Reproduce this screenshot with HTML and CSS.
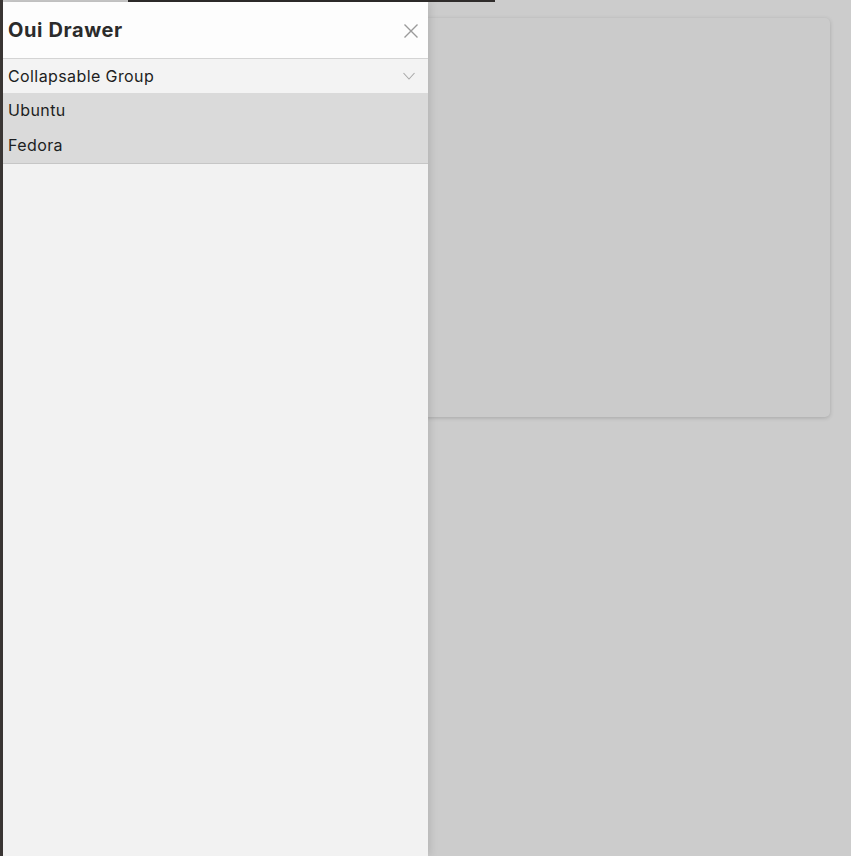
FILE: index.html
```html
<!DOCTYPE html>
<html>
<head>
<meta charset="utf-8">
<link rel="stylesheet" href="styles.css">
</head>
<body>
<div class="topbar"></div>
<main class="page">
  <div class="card"></div>
</main>
<aside class="drawer">
  <header class="drawer-header">
    <h1 class="drawer-title">Oui Drawer</h1>
    <button class="close" aria-label="Close">
      <svg width="16" height="16" viewBox="0 0 16 16"><path d="M1.5 1.5 L14.5 14.5 M14.5 1.5 L1.5 14.5" stroke="#9a9a9a" stroke-width="1.4" fill="none"/></svg>
    </button>
  </header>
  <div class="group">
    <div class="group-head">
      <span>Collapsable Group</span>
      <svg class="chev" width="14" height="8" viewBox="0 0 14 8"><path d="M1.5 1 L7 7 L12.5 1" stroke="#a8a8a8" stroke-width="1.1" fill="none"/></svg>
    </div>
    <div class="group-items">
      <div class="item">Ubuntu</div>
      <div class="item">Fedora</div>
    </div>
  </div>
</aside>
</body>
</html>
```
FILE: styles.css
```css
html, body {
  margin: 0;
  padding: 0;
  height: 100%;
}
body {
  background: #cccccc;
  font-family: "Inter", "Noto Sans", sans-serif;
  color: #1d1e22;
  border-left: 3px solid #3b3735;
  box-sizing: border-box;
  overflow: hidden;
}
.topbar {
  position: absolute;
  top: 0;
  left: 128px;
  width: 367px;
  height: 2px;
  background: #2f2c2b;
}
.page {
  padding: 18px 21px 0 20px;
}
.card {
  height: 399px;
  background: #cbcbcb;
  border-radius: 5px;
  box-shadow: 0 1px 4px rgba(0,0,0,0.18);
}
.drawer {
  position: fixed;
  top: 2px;
  left: 3px;
  bottom: 0;
  width: 425px;
  background: #f2f2f2;
  box-shadow: 2px 0 8px rgba(0,0,0,0.12);
  display: flex;
  flex-direction: column;
}
.drawer-header {
  height: 56px;
  background: #fdfdfd;
  border-bottom: 1px solid #d4d4d4;
  display: flex;
  align-items: center;
  justify-content: space-between;
  padding: 0 9px 0 5px;
}
.drawer-title {
  margin: 0;
  font-size: 20px;
  font-weight: 700;
  color: #2b2b2b;
  letter-spacing: 0.6px;
}
.close {
  border: 0;
  background: none;
  padding: 0;
  display: flex;
  margin-top: 1px;
}
.group-head {
  height: 34px;
  background: #f3f3f3;
  display: flex;
  align-items: center;
  justify-content: space-between;
  padding: 0 12px 0 5px;
  font-size: 16px;
  letter-spacing: 0.4px;
}
.group-items {
  background: #dadada;
  border-bottom: 1px solid #c6c6c6;
}
.item {
  height: 35px;
  display: flex;
  align-items: center;
  padding-left: 5px;
  padding-bottom: 2px;
  box-sizing: border-box;
  font-size: 16px;
  letter-spacing: 0.4px;
}
```
